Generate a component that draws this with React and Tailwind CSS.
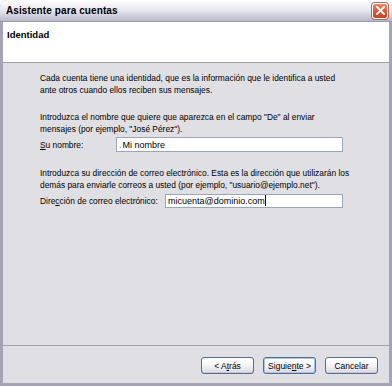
import React from 'react';

const ui = { fontFamily: '"Liberation Sans", Arial, sans-serif' };

// XP-style push button; `def` gives the default-button highlight
const Btn = ({ children, def }) => (
  <button
    className={`w-[53px] h-[17px] rounded-[3px] border border-[#5a6a8a] text-[8.5px] leading-[12px] text-black flex items-center justify-center bg-gradient-to-b from-white via-[#f4f4f6] to-[#d8d8e0] ${
      def ? 'shadow-[inset_0_0_0_1px_#a8c4ec]' : 'shadow-[inset_0_-1px_0_#c8c8d4]'
    }`}
    style={ui}
  >
    {children}
  </button>
);

export default function App() {
  return (
    <div className="w-[392px] h-[386px] flex flex-col bg-[#a4a4b6] rounded-t-[7px] overflow-hidden text-[8.4px] leading-[12px]" style={ui}>
      {/* Title bar */}
      <div className="h-[22px] shrink-0 flex items-center justify-between pl-[6px] pr-[4px] bg-gradient-to-b from-[#ffffff] via-[#e6e6ee] to-[#b9b9cc] border-b border-[#9a9aac]">
        <span className="text-[10px] leading-[14px] font-bold text-black tracking-[0.1px]">Asistente para cuentas</span>
        <div className="w-[16px] h-[16px] rounded-[3px] border border-white bg-gradient-to-b from-[#e98a6e] via-[#d85a3c] to-[#c4462a] flex items-center justify-center shadow-[0_0_0_1px_#b06a5a]">
          <svg width="9" height="9" viewBox="0 0 9 9">
            <path d="M1 1 L8 8 M8 1 L1 8" stroke="white" strokeWidth="1.8" strokeLinecap="square" />
          </svg>
        </div>
      </div>

      {/* Window body */}
      <div className="flex-1 flex flex-col mx-[3px] mb-[3px] bg-[#e0dfe3] min-h-0">
        {/* Header */}
        <div className="h-[41px] shrink-0 bg-white border-b border-[#a0a0a8] pl-[4px] pt-[7px] text-[9.5px] leading-[12px]">
          <span className="font-bold text-black">Identidad</span>
        </div>

        {/* Content */}
        <div className="flex-1 min-h-0 pl-[37px] pt-[9px] text-black">
          <p>
            Cada cuenta tiene una identidad, que es la información que le identifica a usted
            <br />
            ante otros cuando ellos reciben sus mensajes.
          </p>

          <p className="mt-[15px]">
            Introduzca el nombre que quiere que aparezca en el campo "De" al enviar
            <br />
            mensajes (por ejemplo, "José Pérez").
          </p>

          <div className="mt-[2px] flex items-center h-[15px]">
            <span className="w-[76px]">
              <span className="underline">S</span>u nombre:
            </span>
            <div className="w-[227px] h-[15px] bg-white border border-[#9aa6bc] flex items-center pl-[2px] text-[9px]">
              <span className="text-[#555] mr-[1px]">.</span>Mi nombre
            </div>
          </div>

          <p className="mt-[15px]">
            Introduzca su dirección de correo electrónico. Esta es la dirección que utilizarán los
            <br />
            demás para enviarle correos a usted (por ejemplo, "usuario@ejemplo.net").
          </p>

          <div className="mt-[2px] flex items-center h-[15px]">
            <span className="w-[125px]">
              Dire<span className="underline">c</span>ción de correo electrónico:
            </span>
            <div className="w-[178px] h-[14px] bg-white border border-[#9aa6bc] flex items-center pl-[2px] text-[9px]">
              micuenta@dominio.com<span className="inline-block w-px h-[11px] bg-black" />
            </div>
          </div>
        </div>

        {/* Buttons */}
        <div className="h-[38px] shrink-0 border-t border-[#a0a0a8] flex items-start justify-end gap-[9px] pr-[11px] pt-[11px]">
          <Btn>
            &lt; A<span className="underline">t</span>rás
          </Btn>
          <Btn def>
            Siguie<span className="underline">n</span>te &gt;
          </Btn>
          <Btn>Cancelar</Btn>
        </div>
      </div>
    </div>
  );
}
